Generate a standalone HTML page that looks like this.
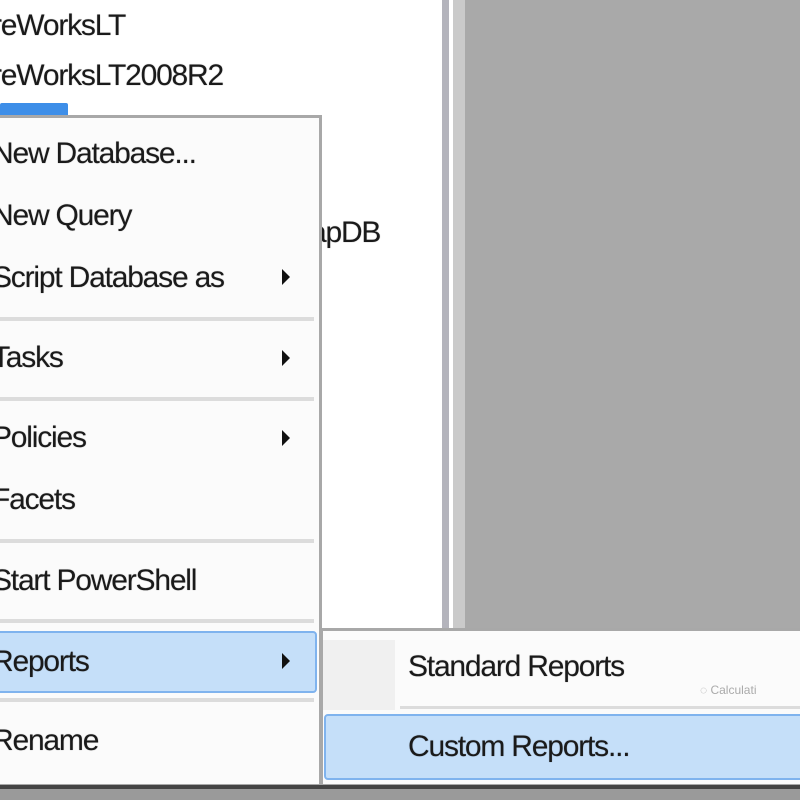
<!DOCTYPE html>
<html><head><style>
body{margin:0;width:800px;height:800px;position:relative;overflow:hidden;background:#fff;font-family:"Liberation Sans",sans-serif;color:#1a1a1a}
div{position:absolute;box-sizing:border-box}
.t{font-size:30px;letter-spacing:-1.2px;white-space:nowrap;line-height:1;text-shadow:0 0 1px rgba(0,0,0,.4)}
.sep{left:0;width:314px;height:4px;background:#dcdcdc}
.arr{width:0;height:0;border-top:8px solid transparent;border-bottom:8px solid transparent;border-left:8px solid #111}
</style></head><body>
<div style="left:442px;top:0;width:7px;height:640px;background:#b4b4bc"></div>
<div style="left:453px;top:0;width:12px;height:640px;background:#cacaca"></div>
<div style="left:465px;top:0;width:335px;height:640px;background:#a9a9a9"></div>
<div class="t" style="left:-8px;top:11px">reWorksLT</div>
<div class="t" style="left:-8px;top:61px">reWorksLT2008R2</div>
<div class="t" style="left:310px;top:218px">apDB</div>
<div style="left:0;top:103px;width:68px;height:14px;background:#3d8ee8;border-radius:2px"></div>
<div style="left:-4px;top:115px;width:326px;height:672px;background:#fbfbfb;border:3px solid #a8a8a8;border-left:none"></div>
<div class="t" style="left:-8px;top:139px">New Database...</div>
<div class="t" style="left:-8px;top:201px">New Query</div>
<div class="t" style="left:-8px;top:263px">Script Database as</div>
<div class="arr" style="left:282px;top:269px"></div>
<div class="sep" style="top:317px"></div>
<div class="t" style="left:-8px;top:343px">Tasks</div>
<div class="arr" style="left:282px;top:350px"></div>
<div class="sep" style="top:397px"></div>
<div class="t" style="left:-8px;top:423px">Policies</div>
<div class="arr" style="left:282px;top:430px"></div>
<div class="t" style="left:-8px;top:485px">Facets</div>
<div class="sep" style="top:539px"></div>
<div class="t" style="left:-8px;top:566px">Start PowerShell</div>
<div class="sep" style="top:619px"></div>
<div style="left:-4px;top:631px;width:321px;height:62px;background:#c5dff9;border:2px solid #7fb3ee;border-radius:4px"></div>
<div class="t" style="left:-8px;top:647px">Reports</div>
<div class="arr" style="left:282px;top:653px"></div>
<div class="sep" style="top:698px"></div>
<div class="t" style="left:-8px;top:726px">Rename</div>
<div style="left:320px;top:628px;width:490px;height:159px;background:#fbfbfb;border:3px solid #a8a8a8;border-right:none"></div>
<div style="left:323px;top:640px;width:72px;height:70px;background:#f0f0f0"></div>
<div class="t" style="left:408px;top:652px">Standard Reports</div>
<div style="left:700px;top:683px;font-size:12px;color:#aaa">◌ Calculati</div>
<div style="left:400px;top:706px;width:400px;height:3px;background:#dcdcdc"></div>
<div style="left:324px;top:714px;width:480px;height:66px;background:#c5dff9;border:2px solid #7fb3ee;border-radius:4px"></div>
<div class="t" style="left:408px;top:732px">Custom Reports...</div>
<div style="left:0;top:785px;width:800px;height:4px;background:#444"></div>
<div style="left:0;top:789px;width:800px;height:11px;background:#9a9a9a"></div>
</body></html>
